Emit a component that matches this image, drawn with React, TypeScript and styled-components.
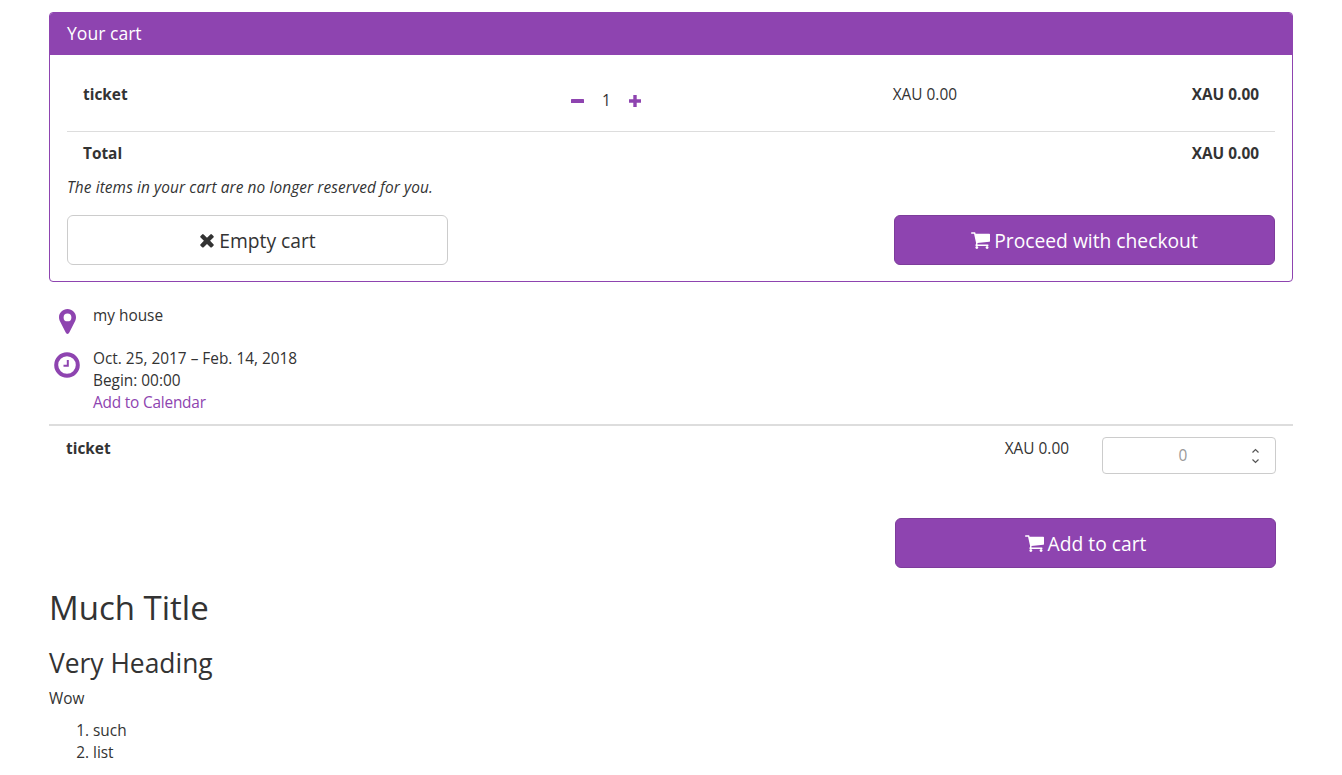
import React from 'react'
import styled, { createGlobalStyle } from 'styled-components'

const purple = '#8e44b0'
const textColor = '#333333'

const GlobalStyles = createGlobalStyle`
  html, body {
    margin: 0;
    padding: 0;
    background: #ffffff;
    color: ${textColor};
    font-family: "Open Sans", "DejaVu Sans", sans-serif;
    font-size: 15.4px;
    line-height: 22px;
  }
  * { box-sizing: border-box; }
`

const Page = styled.div`
  padding: 12px 49px 0;
  height: 775px;
  overflow: hidden;
`

const Panel = styled.section`
  border: 1px solid ${purple};
  border-radius: 4px;
  overflow: hidden;
`

const PanelHeading = styled.header`
  background: ${purple};
  color: #ffffff;
  font-size: 17.6px;
  line-height: 22px;
  padding: 10px 17px 10px;
  margin-top: -1px;
  height: 43px;
`

const PanelBody = styled.div`
  padding: 0 17px 16px;
`

const CartGrid = styled.div<{ $top: number; $bottom: number; $line?: boolean }>`
  display: grid;
  grid-template-columns: 482px 80px 312px 302px;
  padding: ${p => p.$top}px 16px ${p => p.$bottom}px;
  border-bottom: ${p => (p.$line ? '1px solid #dddddd' : '0')};
`

const Strong = styled.div`
  font-weight: 700;
`

const Price = styled.div<{ $bold?: boolean }>`
  text-align: right;
  font-weight: ${p => (p.$bold ? 700 : 400)};
`

const Stepper = styled.div`
  display: flex;
  justify-content: center;
  align-items: center;
  gap: 18px;
  margin-top: 6px;
  padding-left: 2px;
  color: ${purple};
`

const Count = styled.span`
  color: ${textColor};
`

const Note = styled.p`
  margin: 12px 0 16px;
  font-style: italic;
  letter-spacing: 0.11px;
`

const Actions = styled.div`
  display: flex;
  justify-content: space-between;
`

const Button = styled.button<{ $primary?: boolean }>`
  display: flex;
  align-items: center;
  justify-content: center;
  gap: 4px;
  width: 381px;
  height: 50px;
  padding: 2px 0 0;
  border-radius: 6px;
  border: 1px solid ${p => (p.$primary ? '#7d3c9b' : '#cccccc')};
  background: ${p => (p.$primary ? purple : '#ffffff')};
  color: ${p => (p.$primary ? '#ffffff' : textColor)};
  font-family: inherit;
  font-size: 19.25px;
  line-height: 24px;
`

const InfoList = styled.div`
  padding: 23px 0 10px;
  display: flex;
  flex-direction: column;
  gap: 14px;
`

const InfoRow = styled.div`
  display: flex;
  gap: 12px;
  padding-left: 4px;
`

const InfoIcon = styled.div<{ $top: number }>`
  width: 28px;
  display: flex;
  justify-content: center;
  padding-top: ${p => p.$top}px;
  color: ${purple};
`

const CalendarLink = styled.a`
  color: ${purple};
  text-decoration: none;
  letter-spacing: -0.2px;
`

const ProductRow = styled.div`
  border-top: 2px solid #dddddd;
  display: grid;
  grid-template-columns: 1fr auto 174px;
  column-gap: 33px;
  padding: 10px 17px 0 17px;
`

const ProductCell = styled.div`
  padding-top: 2px;
`

const QuantityField = styled.div`
  display: flex;
  align-items: center;
  height: 37px;
  margin-top: 1px;
  border: 1px solid #cccccc;
  border-radius: 4px;
  padding-right: 15px;
`

const QuantityInput = styled.input`
  flex: 1;
  min-width: 0;
  border: 0;
  outline: 0;
  padding: 0 0 0 12px;
  text-align: center;
  background: transparent;
  font-family: inherit;
  font-size: 15.4px;
  &::placeholder { color: #999999; opacity: 1; }
`

const AddRow = styled.div`
  display: flex;
  justify-content: flex-end;
  padding: 44px 17px 0 0;
`

const Title = styled.h1`
  margin: 20px 0 0;
  font-size: 33px;
  line-height: 40px;
  font-weight: 400;
`

const SubTitle = styled.h2`
  margin: 19px 0 0;
  font-size: 26.4px;
  line-height: 32px;
  font-weight: 400;
`

const Paragraph = styled.p`
  margin: 9px 0 0;
`

const NumberedList = styled.ol`
  margin: 10px 0 0;
  padding-left: 44px;
`

const Times = () => (
  <svg width="16" height="16" viewBox="0 0 1408 1408" fill="currentColor">
    <path d="M1298 1050q0 40-28 68l-136 136q-28 28-68 28t-68-28L704 960l-294 294q-28 28-68 28t-68-28L138 1118q-28-28-28-68t28-68l294-294L138 394q-28-28-28-68t28-68l136-136q28-28 68-28t68 28l294 294 294-294q28-28 68-28t68 28l136 136q28 28 28 68t-28 68L976 688l294 294q28 28 28 68z" />
  </svg>
)

const Cart = () => (
  <svg width="19" height="18" viewBox="0 0 1664 1536" fill="currentColor">
    <path d="M640 1408q0 52-38 90t-90 38-90-38-38-90 38-90 90-38 90 38 38 90zm896 0q0 52-38 90t-90 38-90-38-38-90 38-90 90-38 90 38 38 90zM1664 320v512q0 24-16.500 42.500T1607 896L563 1018q13 60 13 70 0 16-24 64h920q26 0 45 19t19 45-19 45-45 19H448q-26 0-45-19t-19-45q0-11 8-31.500t16-36 21.500-40T445 1018L268 195H64q-26 0-45-19T0 131 19 86t45-19h256q16 0 28.500 6.500T368 89t13 24.500 8 26 5.500 29.500 4.500 26h1201q26 0 45 19t19 45z" transform="translate(0 -67)" />
  </svg>
)

const Minus = () => (
  <svg width="13" height="4" viewBox="0 0 13 4" fill="currentColor">
    <rect width="13" height="4" rx="0.6" />
  </svg>
)

const Plus = () => (
  <svg width="12" height="12" viewBox="0 0 12 12" fill="currentColor">
    <path d="M4.300 0h3.400v4.300H12v3.400H7.700V12H4.300V7.700H0V4.300h4.300z" />
  </svg>
)

const Marker = () => (
  <svg width="17" height="25" viewBox="0 0 17 25" fill="currentColor">
    <path fillRule="evenodd" d="M8.500 0C13.200 0 17 3.700 17 8.300c0 1.300-.2 2.400-.7 3.500l-6 11.800c-.4.800-1 1.300-1.800 1.300s-1.400-.5-1.800-1.300L.7 11.800C.2 10.700 0 9.600 0 8.300 0 3.700 3.800 0 8.500 0zm0 4.500a3.900 3.900 0 1 0 0 7.800 3.900 3.900 0 0 0 0-7.800z" />
  </svg>
)

const Clock = () => (
  <svg width="26" height="26" viewBox="0 0 26 26" fill="none" stroke="currentColor">
    <circle cx="13" cy="13" r="10.800" strokeWidth="4" />
    <path d="M13.800 8v5.800H9.500" strokeWidth="2" />
  </svg>
)

const Spinner = () => (
  <svg width="9" height="18" viewBox="0 0 9 18" fill="none" stroke="#555555" strokeWidth="1.200">
    <path d="M1.500 5.500 4.500 2.500l3 3M1.500 12.500l3 3 3-3" />
  </svg>
)

export default function App() {
  return (
    <>
      <GlobalStyles />
      <Page>
        <Panel>
          <PanelHeading>Your cart</PanelHeading>
          <PanelBody>
            <CartGrid $top={29} $bottom={19} $line>
              <Strong>ticket</Strong>
              <Stepper>
                <Minus />
                <Count>1</Count>
                <Plus />
              </Stepper>
              <Price>XAU 0.00</Price>
              <Price $bold>XAU 0.00</Price>
            </CartGrid>
            <CartGrid $top={11} $bottom={0}>
              <Strong>Total</Strong>
              <div />
              <div />
              <Price $bold>XAU 0.00</Price>
            </CartGrid>
            <Note>The items in your cart are no longer reserved for you.</Note>
            <Actions>
              <Button>
                <Times /> Empty cart
              </Button>
              <Button $primary>
                <Cart /> Proceed with checkout
              </Button>
            </Actions>
          </PanelBody>
        </Panel>

        <InfoList>
          <InfoRow>
            <InfoIcon $top={4}>
              <Marker />
            </InfoIcon>
            <div>my house</div>
          </InfoRow>
          <InfoRow>
            <InfoIcon $top={4}>
              <Clock />
            </InfoIcon>
            <div>
              <div>Oct. 25, 2017 – Feb. 14, 2018</div>
              <div>Begin: 00:00</div>
              <CalendarLink href="#">Add to Calendar</CalendarLink>
            </div>
          </InfoRow>
        </InfoList>

        <ProductRow>
          <ProductCell>
            <Strong>ticket</Strong>
          </ProductCell>
          <ProductCell>XAU 0.00</ProductCell>
          <QuantityField>
            <QuantityInput placeholder="0" />
            <Spinner />
          </QuantityField>
        </ProductRow>

        <AddRow>
          <Button $primary>
            <Cart /> Add to cart
          </Button>
        </AddRow>

        <Title>Much Title</Title>
        <SubTitle>Very Heading</SubTitle>
        <Paragraph>Wow</Paragraph>
        <NumberedList>
          <li>such</li>
          <li>list</li>
        </NumberedList>
      </Page>
    </>
  )
}
